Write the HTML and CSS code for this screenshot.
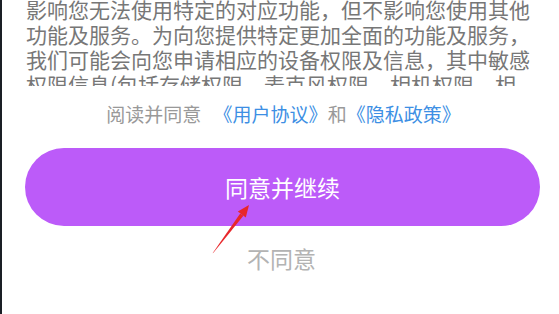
FILE: index.html
```html
<!DOCTYPE html>
<html>
<head>
<meta charset="UTF-8">
<meta name='viewport' content='width=device-width,initial-scale=1.0'/>
<title>用户协议和隐私政策</title>
<link rel="stylesheet" href="styles.css">
</head>
<body>
  <div id="page">
    <div id="notice">
      <p>影响您无法使用特定的对应功能，但不影响您使用其他功能及服务。为向您提供特定更加全面的功能及服务，我们可能会向您申请相应的设备权限及信息，其中敏感权限信息(包括存储权限，麦克风权限，相机权限，相册权限等)将在您使用相应功能时单独征求您的同意。</p>
    </div>
    <div id="agree-line">阅读并同意 <a class="link first" href="#">《用户协议》</a>和<a class="link" href="#">《隐私政策》</a></div>
    <button class="btn-agree">同意并继续</button>
    <div id="disagree">不同意</div>

    <!-- красная стрелка-указатель -->
    <svg id="arrow" width="559" height="314" viewBox="0 0 559 314">
      <polygon points="212.6,253.3 213.4,252.7 243.4,215.8 240.2,213.4" fill="#e8262a"/>
      <polygon points="249,205 245.8,217.6 237.8,211.6" fill="#e8262a"/>
    </svg>
  </div>
</body>
</html>
```

FILE: styles.css
```css
* {
  margin: 0;
  padding: 0;
  box-sizing: border-box;
}

html, body {
  height: 100%;
  background: #fff;
  font-family: "Noto Sans CJK SC", "Noto Sans", sans-serif;
}

#page {
  position: relative;
  height: 314px;
  overflow: hidden;
  border-left: 2px solid #1a1f25;
  display: flex;
  flex-direction: column;
  align-items: center;
}

#notice {
  width: 100%;
  height: 86px;
  overflow: hidden;
  padding: 0 21px 0 24px;
}

#notice p {
  width: 508px;
  margin-top: -3px;
  font-size: 21px;
  line-height: 25px;
  color: #777;
}

#agree-line {
  margin-top: 14px;
  margin-left: 6px;
  font-size: 19px;
  line-height: 28px;
  color: #999;
}

.link {
  color: #3d8fe4;
  text-decoration: none;
}

.link.first {
  margin-left: 8px;
}

.btn-agree {
  margin-top: 20px;
  margin-left: 4px;
  width: 515px;
  height: 78px;
  border: none;
  border-radius: 39px;
  background: #bc5bf9;
  color: #fff;
  font-family: "Noto Sans CJK SC", "Noto Sans", sans-serif;
  font-size: 23px;
  cursor: pointer;
}

#disagree {
  margin-top: 16px;
  margin-left: 2px;
  font-size: 23px;
  line-height: 32px;
  color: #b3b3b3;
}

#arrow {
  position: absolute;
  left: -2px;
  top: 0;
  pointer-events: none;
}
```
